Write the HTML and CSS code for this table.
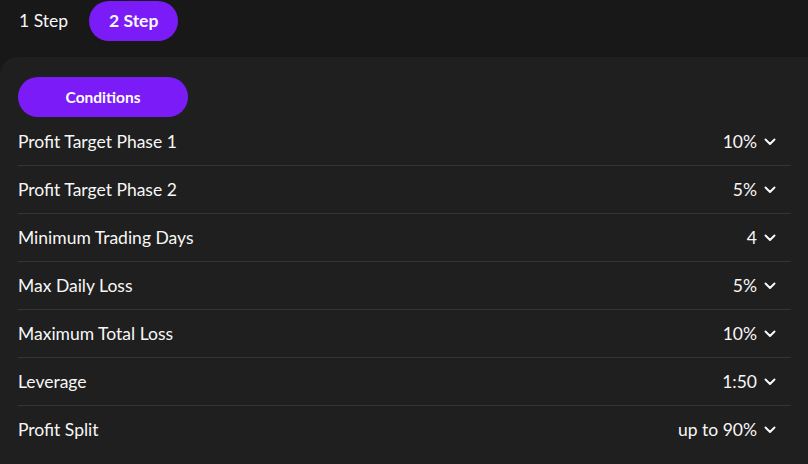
FILE: index.html
```html
<!DOCTYPE html>
<html lang="en">
<head>
  <meta charset="UTF-8" />
  <title>Challenge Conditions</title>
  <link rel="stylesheet" href="styles.css">
</head>
<body>
  <div class="tabs">
    <div class="tab">1 Step</div>
    <div class="tab active">2 Step</div>
  </div>

  <div class="panel">
    <button class="pill">Conditions</button>

    <div class="rows">
      <div class="row"><span>Profit Target Phase 1</span><span class="val">10%<svg class="chev" viewBox="0 0 12 8"><path d="M1.5 1.5 6 6l4.5-4.5"/></svg></span></div>
      <div class="row"><span>Profit Target Phase 2</span><span class="val">5%<svg class="chev" viewBox="0 0 12 8"><path d="M1.5 1.5 6 6l4.5-4.5"/></svg></span></div>
      <div class="row"><span>Minimum Trading Days</span><span class="val">4<svg class="chev" viewBox="0 0 12 8"><path d="M1.5 1.5 6 6l4.5-4.5"/></svg></span></div>
      <div class="row"><span>Max Daily Loss</span><span class="val">5%<svg class="chev" viewBox="0 0 12 8"><path d="M1.5 1.5 6 6l4.5-4.5"/></svg></span></div>
      <div class="row"><span>Maximum Total Loss</span><span class="val">10%<svg class="chev" viewBox="0 0 12 8"><path d="M1.5 1.5 6 6l4.5-4.5"/></svg></span></div>
      <div class="row"><span>Leverage</span><span class="val">1:50<svg class="chev" viewBox="0 0 12 8"><path d="M1.5 1.5 6 6l4.5-4.5"/></svg></span></div>
      <div class="row"><span>Profit Split</span><span class="val">up to 90%<svg class="chev" viewBox="0 0 12 8"><path d="M1.5 1.5 6 6l4.5-4.5"/></svg></span></div>
    </div>
  </div>
</body>
</html>
```

FILE: styles.css
```css
body {
  margin: 0;
  background: #181818;
  color: #f7f7f7;
  font-family: Lato, "Noto Sans", sans-serif;
  height: 464px;
  overflow: hidden;
}
.tabs {
  display: flex;
  gap: 2px;
  padding-top: 1px;
}
.tab {
  height: 40px;
  line-height: 40px;
  padding: 0 19px;
  font-size: 17.5px;
  border-radius: 20px;
  cursor: pointer;
}
.tab.active {
  background: #7b1cf8;
  font-weight: 700;
  padding: 0 20px;
}
.panel {
  margin-top: 16px;
  background: #1f1f1f;
  border-top-left-radius: 18px;
  padding: 20px 17px 0 18px;
  height: 407px;
}
.pill {
  width: 170px;
  height: 40px;
  border: none;
  border-radius: 20px;
  background: #7b1cf8;
  color: #fff;
  font-family: inherit;
  font-size: 15.5px;
  font-weight: 700;
  cursor: pointer;
}
.rows {
  margin-top: 1px;
}
.row {
  display: flex;
  justify-content: space-between;
  align-items: center;
  height: 47px;
  font-size: 17.5px;
  border-bottom: 1px solid #353535;
}
.row:last-child {
  border-bottom: none;
}
.val {
  display: flex;
  align-items: center;
  gap: 7px;
  padding-right: 15px;
}
.chev {
  width: 12px;
  height: 8px;
  fill: none;
  stroke: #f7f7f7;
  stroke-width: 2;
  stroke-linecap: round;
  stroke-linejoin: round;
}
```
